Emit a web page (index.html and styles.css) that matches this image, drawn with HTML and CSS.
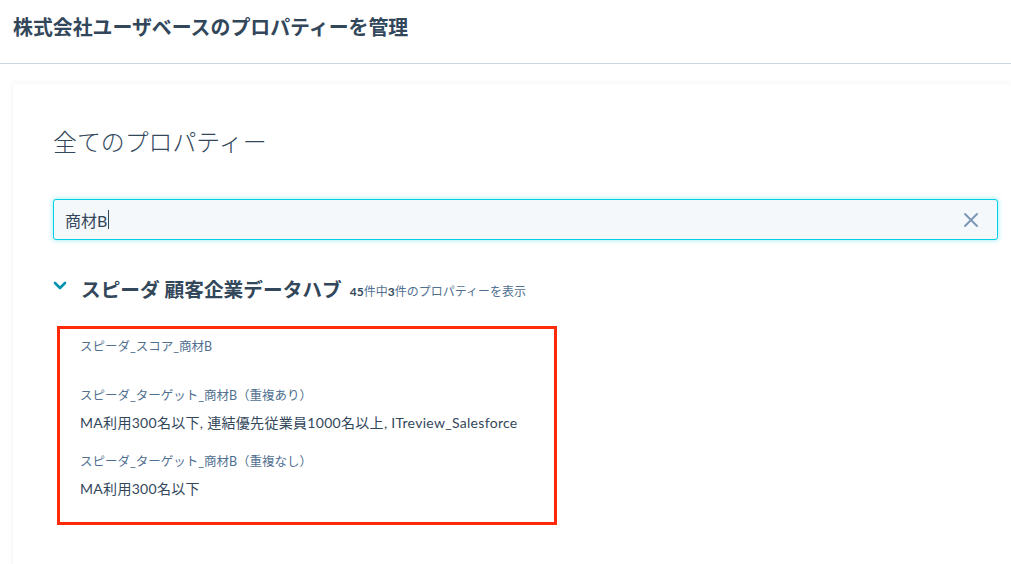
FILE: index.html
```html
<!DOCTYPE html>
<html lang="ja">
<head>
<meta charset="UTF-8">
<title>プロパティーを管理</title>
<link rel="stylesheet" href="styles.css">
</head>
<body>
<header class="page-header">
  <h1>株式会社ユーザベースのプロパティーを管理</h1>
</header>

<main class="card">
  <h2 class="card-title">全てのプロパティー</h2>

  <!-- search box, shown focused -->
  <div class="search">
    <span class="search-text">商材B</span><span class="caret"></span>
    <svg class="search-clear" width="16" height="16" viewBox="0 0 16 16">
      <path d="M2 2 L14 14 M14 2 L2 14" stroke="#7c98b6" stroke-width="2" stroke-linecap="round"/>
    </svg>
  </div>

  <div class="group-head">
    <svg class="chevron" width="14" height="10" viewBox="0 0 14 10">
      <path d="M2 2 L7 7 L12 2" fill="none" stroke="#0091ae" stroke-width="2.6" stroke-linecap="round" stroke-linejoin="round"/>
    </svg>
    <span class="group-title">スピーダ 顧客企業データハブ</span>
    <span class="group-count"><b>45</b>件中<b>3</b>件のプロパティーを表示</span>
  </div>

  <div class="results">
    <div class="prop">
      <div class="prop-label">スピーダ_スコア_商材B</div>
      <div class="prop-value empty"></div>
    </div>
    <div class="prop">
      <div class="prop-label">スピーダ_ターゲット_商材B（重複あり）</div>
      <div class="prop-value">MA利用300名以下, 連結優先従業員1000名以上, ITreview_Salesforce</div>
    </div>
    <div class="prop">
      <div class="prop-label">スピーダ_ターゲット_商材B（重複なし）</div>
      <div class="prop-value">MA利用300名以下</div>
    </div>
  </div>
</main>
</body>
</html>
```

FILE: styles.css
```css
body { margin:0; background:#fff; color:#33475b; font-family:'Lato','Noto Sans CJK JP',sans-serif; overflow:hidden; height:564px; }

.page-header { height:63px; border-bottom:1px solid #cbd6e2; padding:0 13px; display:flex; align-items:center; }
.page-header h1 { margin:0; font-size:19.9px; font-weight:700; color:#33475b; margin-top:-10px; }

.card { margin:20px 0 0 13px; padding:42px 13px 0 40px; height:460px; background:#fff; border-radius:3px; box-shadow:0 0 6px rgba(45,62,80,0.08); }
.card-title { margin:0; font-size:23.9px; font-weight:300; line-height:32px; color:#33475b; }

.search { margin-top:41px; height:39px; display:flex; align-items:center; padding:0 18px 0 11px; background:#f5f8fa; border:1px solid #00d0e4; border-radius:3px; box-shadow:0 0 4px 1px rgba(0,208,228,0.3); font-size:16px; }
.search-text { color:#33475b; }
.caret { width:1px; height:19px; background:#33475b; margin-left:1px; }
.search-clear { margin-left:auto; }

.group-head { margin-top:34px; display:flex; align-items:center; height:28px; }
.chevron { margin:0 14px 4px 0; }
.group-title { font-size:19.7px; font-weight:700; color:#33475b; }
.group-count { font-size:12px; color:#516f90; margin:4px 0 0 8px; }
.group-count b { color:#33475b; }

.results { margin-top:24px; margin-left:4px; width:474px; border:3px solid #ff2a0a; padding:9px 0 3px 20px; }
.prop { margin-bottom:20px; }
.prop-label { font-size:12.5px; line-height:18px; color:#516f90; }
.prop-value { margin-top:8px; font-size:14px; line-height:20px; color:#33475b; letter-spacing:0.3px; }
.prop-value.empty { height:3px; }
```
